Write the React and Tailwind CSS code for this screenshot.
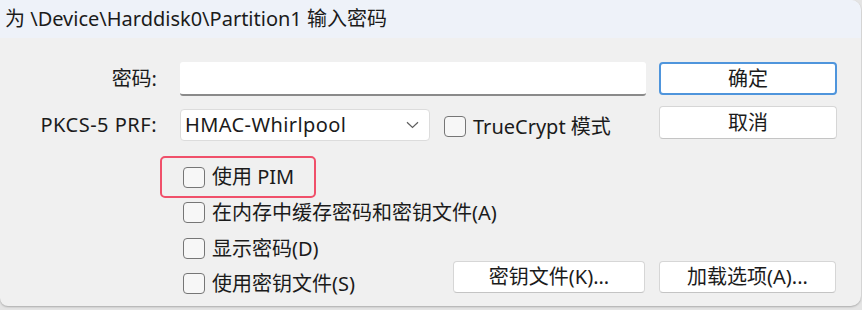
import React from "react";

const FONT = { fontFamily: '"Segoe UI", "Noto Sans", "Noto Sans CJK SC", sans-serif' };

function Checkbox({ label, className = "" }) {
  return (
    <div className={"flex items-center h-[21px] " + className}>
      <div className="w-[22px] h-[21px] rounded-[4px] border border-[#767676] bg-[#f7f7f7] shrink-0" />
      <span className="ml-[7px] text-[20px] leading-none text-[#1b1b1b] whitespace-nowrap">{label}</span>
    </div>
  );
}

function Button({ children, primary = false, className = "" }) {
  return (
    <div
      className={
        "flex items-center justify-center rounded-[4px] bg-white text-[20px] leading-none text-[#1b1b1b] " +
        (primary
          ? "border-2 border-[#4f95dc]"
          : "border border-[#d6d6d6] border-b-[#c4c4c4]") +
        " " +
        className
      }
    >
      {children}
    </div>
  );
}

export default function App() {
  return (
    <div className="w-[862px] h-[310px] bg-[#e4e4e4] overflow-hidden" style={FONT}>
      <div className="w-[861px] h-[306px] rounded-tr-[10px] rounded-bl-[8px] rounded-br-[10px] bg-[#f0f0f0] overflow-hidden flex flex-col shadow-[0_1px_2px_rgba(0,0,0,0.25)]">
        {/* title bar */}
        <div className="h-[38px] bg-[#eef2f9] flex items-center pl-[5px] text-[20px] text-[#1b1b1b] whitespace-nowrap">
          为 \Device\Harddisk0\Partition1 输入密码
        </div>

        {/* body */}
        <div className="flex flex-col pt-[24px]">
          {/* row 1 */}
          <div className="flex items-start h-[34px]">
            <div className="w-[157px] h-[34px] flex items-center justify-end text-[20px] text-[#1b1b1b]">密码:</div>
            <div className="ml-[23px] w-[466px] h-[34px] bg-white rounded-[3px] border-b-2 border-[#8a8a8a]" />
            <Button primary className="ml-[13px] w-[178px] h-[33px]">确定</Button>
          </div>

          {/* row 2 */}
          <div className="flex items-start mt-[10px] h-[36px]">
            <div className="w-[157px] h-[32px] mt-[3px] flex items-center justify-end text-[20px] tracking-[0.5px] text-[#1b1b1b] whitespace-nowrap">PKCS-5 PRF:</div>
            <div className="ml-[23px] mt-[3px] w-[250px] h-[32px] bg-white rounded-[4px] border border-[#dcdcdc] flex items-center justify-between pl-[4px] pr-[10px]">
              <span className="text-[20px] leading-none tracking-[0.4px] text-[#1b1b1b]">HMAC-Whirlpool</span>
              <svg width="13" height="8" viewBox="0 0 13 8" fill="none">
                <path d="M1 1.2 L6.5 6.5 L12 1.2" stroke="#5e5e5e" strokeWidth="1.2" />
              </svg>
            </div>
            <Checkbox label="TrueCrypt 模式" className="ml-[14px] mt-[10px]" />
            <div className="flex-1" />
            <Button className="w-[178px] h-[33px] mr-[24px]">取消</Button>
          </div>

          {/* checkbox block */}
          <div className="flex flex-col mt-[14px]">
            <div className="ml-[160px] w-[156px] h-[42px] rounded-[5px] border-2 border-[#f0506a] flex items-center pl-[21px]">
              <Checkbox label="使用 PIM" />
            </div>
            <Checkbox label="在内存中缓存密码和密钥文件(A)" className="ml-[183px] mt-[4px]" />
            <Checkbox label="显示密码(D)" className="ml-[183px] mt-[15px]" />
            <div className="flex items-start mt-[2px]">
              <Checkbox label="使用密钥文件(S)" className="ml-[183px] mt-[12px]" />
              <div className="flex-1" />
              <Button className="w-[192px] h-[32px] mr-[14px]">密钥文件(K)...</Button>
              <Button className="w-[177px] h-[32px] mr-[25px]">加载选项(A)...</Button>
            </div>
          </div>
        </div>
      </div>
    </div>
  );
}
